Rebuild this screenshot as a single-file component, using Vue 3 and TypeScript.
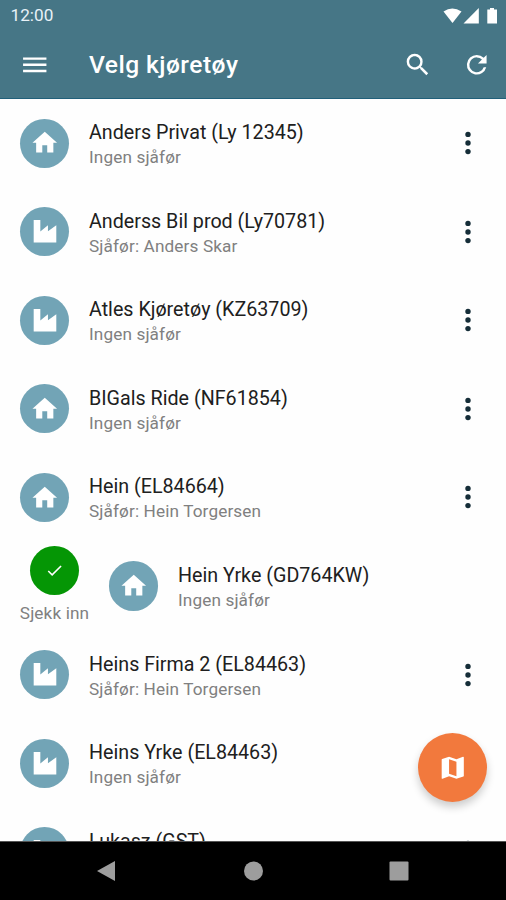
<script setup lang="ts">
interface Vehicle {
  name: string
  driver: string
  kind: 'home' | 'work'
  checkIn?: boolean
}

const vehicles: Vehicle[] = [
  { name: 'Anders Privat (Ly 12345)', driver: 'Ingen sjåfør', kind: 'home' },
  { name: 'Anderss Bil prod (Ly70781)', driver: 'Sjåfør: Anders Skar', kind: 'work' },
  { name: 'Atles Kjøretøy (KZ63709)', driver: 'Ingen sjåfør', kind: 'work' },
  { name: 'BIGals Ride (NF61854)', driver: 'Ingen sjåfør', kind: 'home' },
  { name: 'Hein (EL84664)', driver: 'Sjåfør: Hein Torgersen', kind: 'home' },
  { name: 'Hein Yrke (GD764KW)', driver: 'Ingen sjåfør', kind: 'home', checkIn: true },
  { name: 'Heins Firma 2 (EL84463)', driver: 'Sjåfør: Hein Torgersen', kind: 'work' },
  { name: 'Heins Yrke (EL84463)', driver: 'Ingen sjåfør', kind: 'work' },
  { name: 'Lukasz (GST)', driver: '', kind: 'work' },
]

const icons = {
  home: 'M10 20v-6h4v6h5v-8h3L12 3 2 12h3v8z',
  work: 'M3 2.5h5.400v9.300l6.200-5v4.700l6.800-4.700v13.900H3z',
}
</script>

<template>
  <div class="screen">
    <header class="top">
      <div class="status">
        <span class="clock">12:00</span>
        <svg class="signals" width="56" height="18" viewBox="0 0 56 18">
          <path d="M1.500 4.600Q10.300 -1.600 19.500 4.600L10.500 16Z" />
          <path d="M21.500 16.500 36.800 1v15.500z" />
          <path d="M45.300 2.500h2.700V1h4v1.500h3v14H45.300z" />
        </svg>
      </div>
      <div class="toolbar">
        <svg class="icon" viewBox="0 0 24 24"><path d="M2.500 18h19v-2h-19zm0-5h19v-2h-19zm0-7v2h19V6z" /></svg>
        <h1>Velg kjøretøy</h1>
        <svg class="icon search" viewBox="0 0 24 24"><path d="M15.500 14h-.79l-.28-.27A6.470 6.470 0 0 0 16 9.500 6.500 6.500 0 1 0 9.500 16c1.610 0 3.090-.59 4.230-1.570l.27.28v.79l5 4.990L20.490 19zm-6 0C7.010 14 5 11.990 5 9.500S7.010 5 9.500 5 14 7.010 14 9.500 11.990 14 9.500 14z" /></svg>
        <svg class="icon" viewBox="0 0 24 24"><path d="M17.650 6.350A7.960 7.960 0 0 0 12 4a8 8 0 1 0 7.730 10h-2.080A6 6 0 1 1 12 6c1.660 0 3.140.69 4.220 1.780L13 11h7V4z" /></svg>
      </div>
    </header>

    <main class="list">
      <div v-for="v in vehicles" :key="v.name" class="row">
        <div v-if="v.checkIn" class="check-in">
          <span class="disc green">
            <svg class="check" viewBox="0 0 24 24"><path d="M9 16.170 4.830 12l-1.420 1.410L9 19 21 7l-1.410-1.410z" /></svg>
          </span>
          <span class="check-label">Sjekk inn</span>
        </div>
        <span class="disc">
          <svg class="icon" viewBox="0 0 24 24"><path :d="icons[v.kind]" /></svg>
        </span>
        <div class="text">
          <div class="name">{{ v.name }}</div>
          <div class="driver">{{ v.driver }}</div>
        </div>
        <svg v-if="!v.checkIn" class="more" viewBox="0 0 8 26">
          <circle cx="4" cy="4.400" r="2.700" /><circle cx="4" cy="13" r="2.700" /><circle cx="4" cy="21.600" r="2.700" />
        </svg>
      </div>
    </main>

    <button class="fab" aria-label="Kart">
      <svg class="icon" viewBox="0 0 24 24"><path d="M20.500 3l-.16.03L15 5.100 9 3 3.360 4.900c-.21.07-.36.25-.36.48V20.500c0 .28.22.5.5.5l.16-.03L9 18.900l6 2.100 5.640-1.900c.21-.07.36-.25.36-.48V3.500c0-.28-.22-.5-.5-.5zM15 19l-6-2.110V5l6 2.110V19z" /></svg>
    </button>

    <nav class="nav">
      <svg viewBox="0 0 22 22"><path d="M1 11 19 1v20z" /></svg>
      <svg viewBox="0 0 22 22"><circle cx="11.500" cy="11" r="9.500" /></svg>
      <svg viewBox="0 0 22 22"><rect x="1.500" y="1.500" width="19" height="19" rx="1" /></svg>
    </nav>
  </div>
</template>

<style>
body {
  margin: 0;
}
</style>

<style scoped>
.screen {
  position: relative;
  display: flex;
  flex-direction: column;
  width: 506px;
  height: 900px;
  overflow: hidden;
  background: #fefefe;
  font-family: Roboto, sans-serif;
}
.top {
  box-sizing: border-box;
  flex: none;
  height: 98.800px;
  background: #467686;
  border-bottom: 1px solid #21607a;
  color: #fff;
}
.status {
  display: flex;
  align-items: center;
  justify-content: space-between;
  height: 31px;
  padding: 0 8px 0 10.500px;
}
.clock {
  font-size: 17.200px;
  line-height: 31px;
  color: #e8f2f8;
}
.signals {
  fill: #fff;
}
.toolbar {
  display: flex;
  align-items: center;
  height: 67px;
  padding: 0 14.500px 0 20px;
}
.icon {
  flex: none;
  width: 29.500px;
  height: 29.500px;
  fill: #fff;
}
h1 {
  flex: 1;
  margin: 1px 0 0 39.500px;
  font-size: 24.600px;
  font-weight: 500;
  line-height: 30px;
  letter-spacing: 0.45px;
}
.search {
  margin-right: 30px;
}
.list {
  flex: 1;
  min-height: 0;
  overflow: hidden;
}
.row {
  box-sizing: border-box;
  display: flex;
  align-items: center;
  height: 88.600px;
  padding: 0 34px 0 20px;
}
.disc {
  display: flex;
  flex: none;
  align-items: center;
  justify-content: center;
  width: 49.200px;
  height: 49.200px;
  border-radius: 50%;
  background: #72a4b6;
}
.green {
  background: #059605;
}
.check {
  width: 19px;
  height: 19px;
  fill: #fff;
}
.check-in {
  display: flex;
  flex-direction: column;
  align-items: center;
  width: 69px;
  margin-right: 20px;
  padding-bottom: 2px;
}
.check-label {
  margin-top: 7px;
  font-size: 17.200px;
  line-height: 22px;
  letter-spacing: 0.12px;
  white-space: nowrap;
  color: #808080;
}
.text {
  flex: 1;
  margin-left: 19.800px;
  padding-top: 3px;
  white-space: nowrap;
}
.name {
  font-size: 19.700px;
  line-height: 25px;
  color: #202020;
}
.driver {
  min-height: 24px;
  font-size: 17.200px;
  line-height: 24px;
  letter-spacing: 0.12px;
  color: #808080;
}
.more {
  width: 8px;
  height: 26px;
  fill: #152d38;
}
.fab {
  position: absolute;
  right: 19px;
  bottom: 98px;
  display: flex;
  align-items: center;
  justify-content: center;
  width: 69px;
  height: 69px;
  padding: 0;
  border: 0;
  border-radius: 50%;
  background: #f2793d;
  box-shadow: 0 5px 9px rgba(0, 0, 0, 0.2);
}
.nav {
  box-sizing: border-box;
  display: flex;
  flex: none;
  align-items: center;
  justify-content: space-between;
  height: 59px;
  padding: 0 96px 0 95.500px;
  border-top: 1px solid #555;
  background: #000;
}
.nav svg {
  width: 22px;
  height: 22px;
  fill: #9d9d9d;
}
</style>
